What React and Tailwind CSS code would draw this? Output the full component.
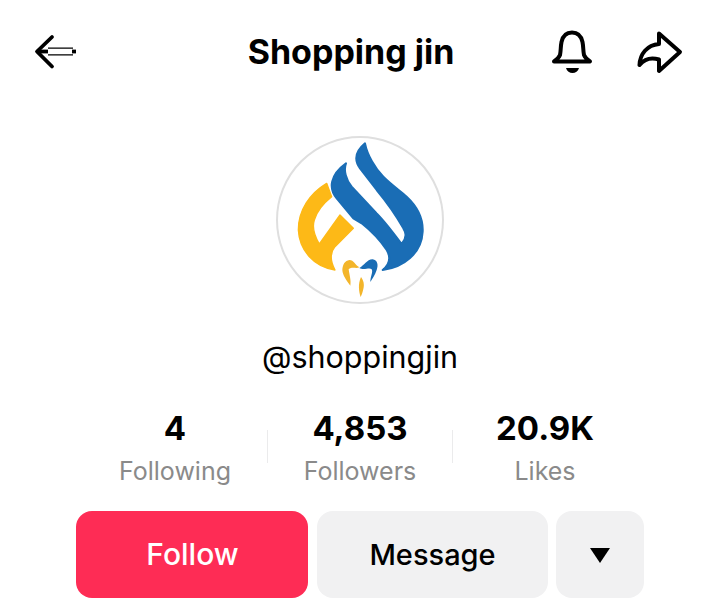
const font = "font-['Inter',sans-serif]";

function BackIcon() {
  return (
    <svg width="44" height="36" viewBox="0 0 44 36" fill="none" className="shrink-0">
      <path d="M18 3 L3 17.500 L18 32.500" stroke="#000" strokeWidth="3.800" strokeLinecap="round" strokeLinejoin="round" />
      <path d="M3 17.500 H14" stroke="#000" strokeWidth="3.800" />
      <path d="M14 14.200 H39 M14 20.800 H39" stroke="#000" strokeWidth="1.300" />
      <path d="M38 17.500 H42" stroke="#000" strokeWidth="3.800" />
    </svg>
  );
}

function BellIcon() {
  return (
    <svg width="42" height="48" viewBox="0 0 42 48" fill="none">
      <path
        d="M9 26 C10 21 9.500 18 10.500 13 C12 6 16 3.500 21 3.500 C26 3.500 30 6 31.500 13 C32.500 18 32 21 33 26 C34 28.500 36 30.500 39 32.500 H3 C6 30.500 8 28.500 9 26 Z"
        stroke="#000"
        strokeWidth="4"
        strokeLinejoin="round"
      />
      <path d="M15 39 H28 C27 42.500 24.500 44 21.500 44 C18.500 44 16 42.500 15 39 Z" fill="#000" />
    </svg>
  );
}

function ShareIcon() {
  return (
    <svg width="48" height="44" viewBox="0 0 48 44" fill="none">
      <path
        d="M4.500 35 C5 24 12 15 24 14 L24 3.500 L45 22 L24 41 L24 29.500 C16 27 9 29.500 4.500 35 Z"
        stroke="#000"
        strokeWidth="4"
        strokeLinejoin="round"
        strokeLinecap="round"
      />
    </svg>
  );
}

function Logo() {
  return (
    <svg viewBox="54 39 492 492" className="w-full h-full">
      <path
        d="M315 55 C322 90 345 130 370 155 C395 180 420 197 440 215 C470 243 490 280 488 320 C485 385 430 428 368 435 C392 415 392 395 380 375 C360 345 330 315 305 295 L280 280 L230 220 C205 190 210 150 258 115 C250 135 258 165 275 185 L350 265 C370 285 405 330 425 357 C440 340 440 325 430 310 C405 265 375 225 350 195 L300 130 C282 105 285 80 315 55 Z"
        fill="#1a6db5"
        stroke="#1a6db5"
        strokeWidth="6"
        strokeLinejoin="round"
      />
      <path
        d="M200 175 L215 215 C190 235 170 260 163 285 C155 310 165 335 178 357 L240 270 L280 310 L225 365 C208 385 212 410 225 435 C160 425 118 375 115 315 C115 255 150 205 200 175 Z"
        fill="#fdb917"
        stroke="#fdb917"
        strokeWidth="4"
        strokeLinejoin="round"
      />
      <path
        d="M247 435 C248 418 255 407 268 405 C282 405 285 420 298 427 C288 432 278 424 266 432 C268 450 274 465 271 482 C258 465 248 450 247 435 Z"
        fill="#f3b52a"
      />
      <path
        d="M298 429 C312 422 322 402 338 403 C352 405 356 420 350 435 C345 450 338 460 331 471 C331 455 340 440 335 433 C328 425 312 438 298 429 Z"
        fill="#1a6db5"
      />
      <path d="M303 456 C310 465 314 478 310 492 C308 502 305 510 302 516 C297 500 293 478 303 456 Z" fill="#f3b52a" />
    </svg>
  );
}

function Stat({ value, label }) {
  return (
    <div className="w-[184px] flex flex-col items-center">
      <div className="text-[33px] leading-[40px] font-bold text-black">{value}</div>
      <div className="text-[25px] leading-[34px] mt-[6px] text-[#8a8a8a]">{label}</div>
    </div>
  );
}

export default function App() {
  return (
    <div className={`w-[710px] h-[598px] bg-white overflow-hidden ${font}`}>
      <header className="h-[104px] pl-[34px] pr-[27px] pt-[29px] flex items-start">
        <div className="w-[213px] pt-[5px]">
          <BackIcon />
        </div>
        <h1 className="text-[34px] leading-[46px] font-bold text-black w-[208px] text-center whitespace-nowrap">
          Shopping jin
        </h1>
        <div className="flex-1 flex justify-between pl-[96px]">
          <BellIcon />
          <div className="pt-[1px]">
            <ShareIcon />
          </div>
        </div>
      </header>
      <div className="pl-[10px]">
        <div className="flex justify-center pt-[32px]">
          <div className="w-[168px] h-[168px] rounded-full border-2 border-[#dfdfdf] overflow-hidden">
            <Logo />
          </div>
        </div>
        <div className="mt-[33px] text-center text-[30.500px] leading-[40px] text-black">@shoppingjin</div>
        <div className="mt-[31px] flex justify-center">
          <Stat value="4" label="Following" />
          <div className="w-px h-[33px] mt-[22px] bg-[#ebebec]" />
          <Stat value="4,853" label="Followers" />
          <div className="w-px h-[33px] mt-[22px] bg-[#ebebec]" />
          <Stat value="20.9K" label="Likes" />
        </div>
      </div>
      <div className="mt-[23px] pl-[76px] flex">
        <button className="w-[232px] h-[87px] pl-[1px] rounded-[16px] bg-[#fe2c55] text-white text-[30px] font-medium">
          Follow
        </button>
        <button className="ml-[9px] w-[231px] h-[87px] rounded-[16px] bg-[#f1f1f2] text-black text-[29px] font-medium">
          Message
        </button>
        <button className="ml-[8px] w-[88px] h-[87px] pt-[2px] rounded-[16px] bg-[#f1f1f2] flex items-center justify-center">
          <svg width="20" height="16" viewBox="0 0 20 16">
            <path d="M0 0 H20 L10 15 Z" fill="#000" />
          </svg>
        </button>
      </div>
    </div>
  );
}
